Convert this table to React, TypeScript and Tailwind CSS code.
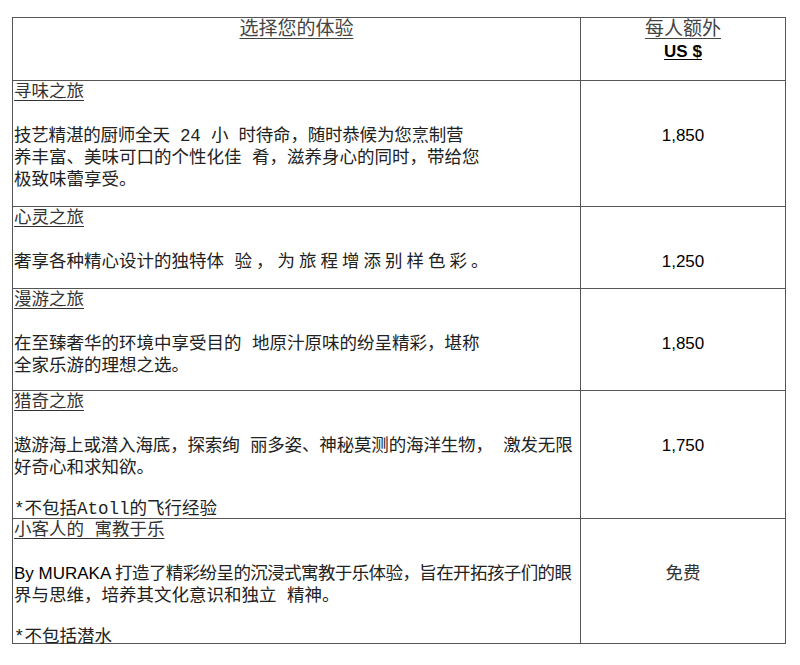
import React from "react";

const cjk = "font-['Liberation_Mono','Noto_Sans_CJK_SC',monospace]";
const arial = "font-['Liberation_Sans','Noto_Sans_CJK_SC',sans-serif]";

type Line = { c: React.ReactNode; short?: boolean };

type Row = {
  title: string;
  lines: Line[];
  price: string;
  priceCjk?: boolean;
  h: string;
};

const rows: Row[] = [
  {
    title: "寻味之旅",
    lines: [
      { c: "" },
      { c: <span className="tracking-[-0.2px]">技艺精湛的厨师全天 24 小 时待命，随时恭候为您烹制营</span> },
      { c: "养丰富、美味可口的个性化佳 肴，滋养身心的同时，带给您" },
      { c: "极致味蕾享受。" },
    ],
    price: "1,850",
    h: "h-[126px]",
  },
  {
    title: "心灵之旅",
    lines: [
      { c: "" },
      {
        c: (
          <>
            <span>奢享各种精心设计的独特体 </span>
            <span className="tracking-[4px]">验，为旅程增添别样色彩。</span>
          </>
        ),
      },
    ],
    price: "1,250",
    h: "h-[82px]",
  },
  {
    title: "漫游之旅",
    lines: [
      { c: "" },
      { c: "在至臻奢华的环境中享受目的 地原汁原味的纷呈精彩，堪称" },
      { c: "全家乐游的理想之选。" },
    ],
    price: "1,850",
    h: "h-[102px]",
  },
  {
    title: "猎奇之旅",
    lines: [
      { c: "" },
      { c: <span className="tracking-[-0.15px]">遨游海上或潜入海底，探索绚 丽多姿、神秘莫测的海洋生物， 激发无限</span> },
      { c: "好奇心和求知欲。" },
      { c: "", short: true },
      { c: "*不包括Atoll的飞行经验", short: true },
    ],
    price: "1,750",
    h: "h-[128px]",
  },
  {
    title: "小客人的 寓教于乐",
    lines: [
      { c: "" },
      {
        c: (
          <>
            <span className={`${arial} text-black text-[17px]`}>By MURAKA </span>
            <span className="tracking-[-0.6px]"> 打造了精彩纷呈的沉浸式寓教于乐体验，旨在开拓孩子们的眼</span>
          </>
        ),
      },
      { c: "界与思维，培养其文化意识和独立 精神。" },
      { c: "", short: true },
      { c: "*不包括潜水", short: true },
    ],
    price: "免费",
    priceCjk: true,
    h: "h-[125px]",
  },
];

export default function App() {
  return (
    <div className="w-[800px] h-[665px] bg-white pt-[17px] pl-[12px] overflow-hidden">
      <div className="w-[774px] border border-[#555] text-[#222]">
        {/* header */}
        <div className="flex h-[62px]">
          <div className="w-[568px] border-r border-[#555] pt-[1px] text-center">
            <div className={`${cjk} text-[19px] leading-[22px] text-[#444] underline underline-offset-[3px] decoration-1`}>
              选择您的体验
            </div>
          </div>
          <div className="flex-1 pt-[1px] text-center">
            <div className={`${cjk} text-[19px] leading-[22px] text-[#444] underline underline-offset-[3px] decoration-1`}>
              每人额外
            </div>
            <div className={`${arial} text-[17px] leading-[22px] font-bold text-black underline underline-offset-[2px] decoration-1`}>
              US $
            </div>
          </div>
        </div>
        {rows.map((r, i) => (
          <div key={i} className={`flex border-t border-[#555] ${r.h}`}>
            <div className={`w-[568px] border-r border-[#555] pl-[1px] ${cjk} text-[17.5px] leading-[22px] whitespace-nowrap`}>
              <div className="underline underline-offset-[3px] decoration-1 text-[#333]">{r.title}</div>
              {r.lines.map((l, j) => (
                <div key={j} className={l.short ? "h-[20px] leading-[20px]" : "h-[22px]"}>
                  {l.c}
                </div>
              ))}
            </div>
            <div className="flex-1 pt-[44px] text-center">
              <div
                className={`${r.priceCjk ? cjk + " text-[17.5px] text-[#333]" : arial + " text-[17px] text-black"} leading-[22px]`}
              >
                {r.price}
              </div>
            </div>
          </div>
        ))}
      </div>
    </div>
  );
}
